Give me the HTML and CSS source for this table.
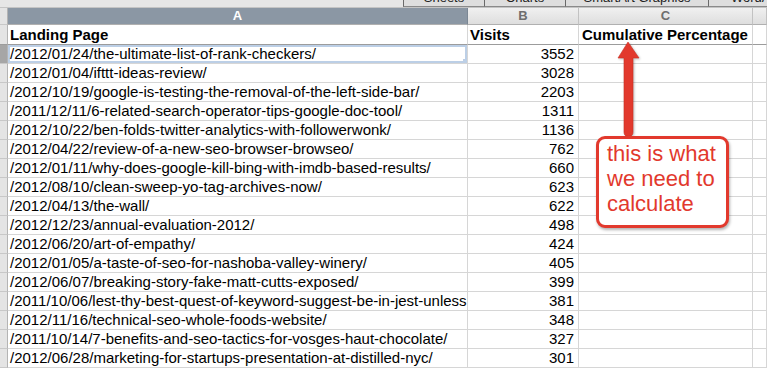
FILE: index.html
```html
<!DOCTYPE html>
<html>
<head>
<meta charset="utf-8">
<link rel="stylesheet" href="styles.css">
</head>
<body>
<div class="sheet">
  <div class="ribbon">
    <div class="ribbon-space"></div>
    <div class="tab tab-sheets">Sheets</div>
    <div class="tab tab-charts">Charts</div>
    <div class="tab tab-smart">SmartArt Graphics</div>
    <div class="tab tab-word">WordArt</div>
  </div>
  <div class="row colhead">
    <div class="cell rn"></div>
    <div class="cell ch ch-sel">A</div>
    <div class="cell ch">B</div>
    <div class="cell ch">C</div>
    <div class="cell ch"></div>
  </div>
  <div class="row head">
    <div class="cell rn"></div>
    <div class="cell a">Landing Page</div>
    <div class="cell b b-head">Visits</div>
    <div class="cell c">Cumulative Percentage</div>
    <div class="cell d"></div>
  </div>
  <div class="row"><div class="cell rn rn-sel"></div><div class="cell a a-sel">/2012/01/24/the-ultimate-list-of-rank-checkers/</div><div class="cell b">3552</div><div class="cell c"></div><div class="cell d"></div></div>
  <div class="row"><div class="cell rn"></div><div class="cell a">/2012/01/04/ifttt-ideas-review/</div><div class="cell b">3028</div><div class="cell c"></div><div class="cell d"></div></div>
  <div class="row"><div class="cell rn"></div><div class="cell a">/2012/10/19/google-is-testing-the-removal-of-the-left-side-bar/</div><div class="cell b">2203</div><div class="cell c"></div><div class="cell d"></div></div>
  <div class="row"><div class="cell rn"></div><div class="cell a">/2011/12/11/6-related-search-operator-tips-google-doc-tool/</div><div class="cell b">1311</div><div class="cell c"></div><div class="cell d"></div></div>
  <div class="row"><div class="cell rn"></div><div class="cell a">/2012/10/22/ben-folds-twitter-analytics-with-followerwonk/</div><div class="cell b">1136</div><div class="cell c"></div><div class="cell d"></div></div>
  <div class="row"><div class="cell rn"></div><div class="cell a">/2012/04/22/review-of-a-new-seo-browser-browseo/</div><div class="cell b">762</div><div class="cell c"></div><div class="cell d"></div></div>
  <div class="row"><div class="cell rn"></div><div class="cell a">/2012/01/11/why-does-google-kill-bing-with-imdb-based-results/</div><div class="cell b">660</div><div class="cell c"></div><div class="cell d"></div></div>
  <div class="row"><div class="cell rn"></div><div class="cell a">/2012/08/10/clean-sweep-yo-tag-archives-now/</div><div class="cell b">623</div><div class="cell c"></div><div class="cell d"></div></div>
  <div class="row"><div class="cell rn"></div><div class="cell a">/2012/04/13/the-wall/</div><div class="cell b">622</div><div class="cell c"></div><div class="cell d"></div></div>
  <div class="row"><div class="cell rn"></div><div class="cell a">/2012/12/23/annual-evaluation-2012/</div><div class="cell b">498</div><div class="cell c"></div><div class="cell d"></div></div>
  <div class="row"><div class="cell rn"></div><div class="cell a">/2012/06/20/art-of-empathy/</div><div class="cell b">424</div><div class="cell c"></div><div class="cell d"></div></div>
  <div class="row"><div class="cell rn"></div><div class="cell a">/2012/01/05/a-taste-of-seo-for-nashoba-valley-winery/</div><div class="cell b">405</div><div class="cell c"></div><div class="cell d"></div></div>
  <div class="row"><div class="cell rn"></div><div class="cell a">/2012/06/07/breaking-story-fake-matt-cutts-exposed/</div><div class="cell b">399</div><div class="cell c"></div><div class="cell d"></div></div>
  <div class="row"><div class="cell rn"></div><div class="cell a">/2011/10/06/lest-thy-best-quest-of-keyword-suggest-be-in-jest-unless</div><div class="cell b">381</div><div class="cell c"></div><div class="cell d"></div></div>
  <div class="row"><div class="cell rn"></div><div class="cell a">/2012/11/16/technical-seo-whole-foods-website/</div><div class="cell b">348</div><div class="cell c"></div><div class="cell d"></div></div>
  <div class="row"><div class="cell rn"></div><div class="cell a">/2011/10/14/7-benefits-and-seo-tactics-for-vosges-haut-chocolate/</div><div class="cell b">327</div><div class="cell c"></div><div class="cell d"></div></div>
  <div class="row"><div class="cell rn"></div><div class="cell a">/2012/06/28/marketing-for-startups-presentation-at-distilled-nyc/</div><div class="cell b">301</div><div class="cell c"></div><div class="cell d"></div></div>

  <svg class="arrow" width="30" height="100" viewBox="612 38 30 100">
    <path d="M628 42 L639 58 L633 58 L633 132 Q633 136.5 628.5 136.5 Q624 136.5 624 132 L624 58 L618 58 Z" fill="#e2392d" stroke="#c92f24" stroke-width="0.6" stroke-linejoin="round"/>
  </svg>
  <div class="callout">this is what<br>we need to<br>calculate</div>
</div>
</body>
</html>
```
FILE: styles.css
```css
html, body {
  margin: 0;
  padding: 0;
  background: #ffffff;
  overflow: hidden;
}
.sheet {
  position: relative;
  width: 767px;
  height: 370px;
  overflow: hidden;
  font-family: "Liberation Sans", Arial, Helvetica, sans-serif;
  color: #000;
}
.ribbon {
  display: flex;
  height: 8px;
  background: #e6e6e6;
  border-bottom: 1px solid #c4c4c4;
  box-sizing: border-box;
  overflow: hidden;
}
.ribbon-space {
  width: 403px;
  flex: none;
}
.tab {
  flex: none;
  box-sizing: border-box;
  border-left: 1px solid #6a6a6a;
  background: #dedede;
  font-size: 13px;
  line-height: 13px;
  margin-top: -9px;
  height: 16px;
  text-align: center;
  color: #222;
  border-bottom: 1px solid #8a8a8a;
}
.tab-sheets { width: 81px; }
.tab-charts { width: 81px; }
.tab-smart { width: 143px; }
.tab-word { width: 80px; text-align: left; padding-left: 22px; }

.row {
  display: grid;
  grid-template-columns: 8px 460px 111px 174px 1fr;
  height: 19px;
}
.cell {
  box-sizing: border-box;
  border-right: 1px solid #d6d6d6;
  border-bottom: 1px solid #d6d6d6;
  white-space: nowrap;
  overflow: hidden;
  font-size: 15px;
  line-height: 18px;
}
.rn {
  background: #e4e4e4;
  border-right-color: #b4b4b4;
  border-bottom-color: #c8c8c8;
}
.rn-sel {
  background: #a6a6a6;
}
.colhead {
  height: 17px;
}
.ch {
  background: linear-gradient(#f0f0f0, #dedede);
  border-right-color: #c2c2c2;
  border-bottom-color: #b0b0b0;
  color: #6e6e6e;
  font-weight: bold;
  font-size: 13px;
  line-height: 16px;
  text-align: center;
}
.ch-sel {
  background: #8b97a4;
  color: #ffffff;
  border-right-color: #7b8794;
}
.head {
  height: 20px;
}
.head .cell {
  font-weight: bold;
  border-bottom: 1px solid #9c9c9c;
  line-height: 19px;
}
.head .rn {
  border-bottom-color: #9c9c9c;
}
.a {
  padding-left: 2px;
}
.b {
  text-align: right;
  padding-right: 4px;
}
.b-head {
  text-align: left;
  padding-left: 2px;
  padding-right: 0;
}
.c {
  padding-left: 3px;
}
.a-sel {
  position: relative;
  box-shadow: inset 0 0 0 2px #bccfe6;
}
.a-sel::after {
  content: "";
  position: absolute;
  right: -1px;
  bottom: -1px;
  width: 5px;
  height: 5px;
  background: #bccfe6;
}
.arrow {
  position: absolute;
  left: 612px;
  top: 38px;
  filter: drop-shadow(1px 1px 1px rgba(0,0,0,0.25));
}
.callout {
  position: absolute;
  left: 596px;
  top: 136px;
  width: 133px;
  height: 92px;
  box-sizing: border-box;
  border: 3px solid #e2392d;
  border-radius: 9px;
  background: #ffffff;
  box-shadow: 1px 2px 3px rgba(0,0,0,0.3);
  color: #e2392d;
  font-size: 22px;
  line-height: 25px;
  padding: 2px 0 0 8px;
  white-space: nowrap;
}
```
